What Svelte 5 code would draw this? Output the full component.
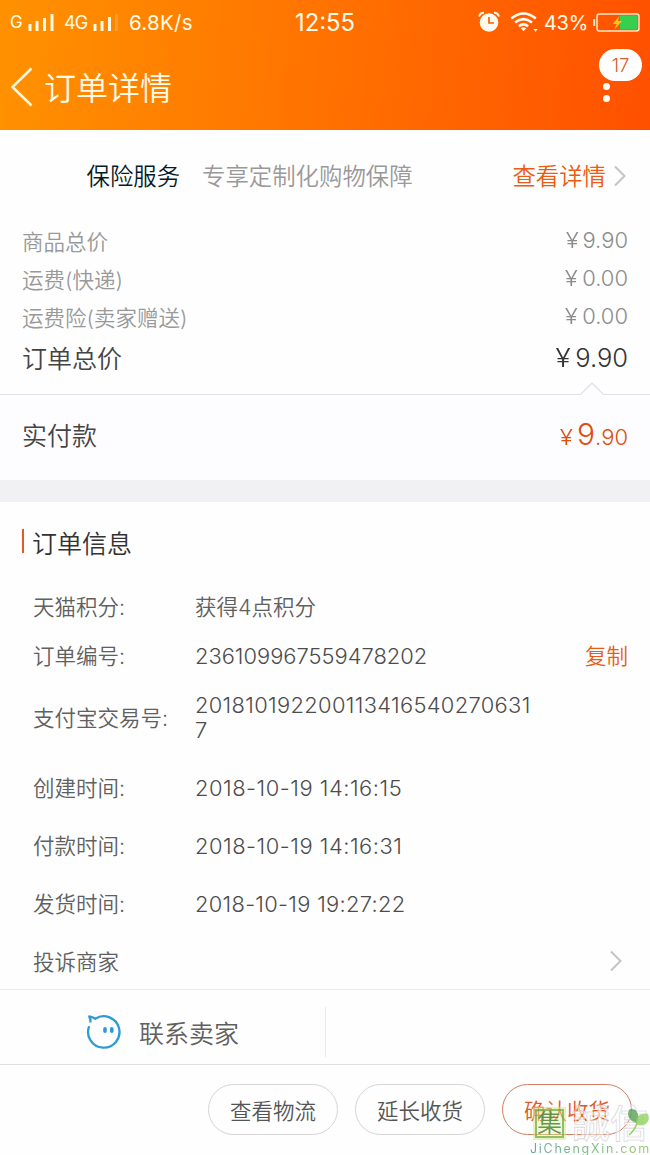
<script>
  const fees = [
    { label: '商品总价', value: '9.90' },
    { label: '运费(快递)', value: '0.00' },
    { label: '运费险(卖家赠送)', value: '0.00' }
  ];
  const info = [
    { label: '天猫积分:', value: '获得4点积分', h: 50, cls: 'points' },
    { label: '订单编号:', value: '236109967559478202', h: 49, copy: true, cls: 'order' },
    { label: '支付宝交易号:', value: '2018101922001134165402706317', h: 74, cls: 'trade' },
    { label: '创建时间:', value: '2018-10-19 14:16:15', h: 67, cls: 'date' },
    { label: '付款时间:', value: '2018-10-19 14:16:31', h: 48, cls: 'date' },
    { label: '发货时间:', value: '2018-10-19 19:27:22', h: 68, cls: 'date sent' }
  ];
</script>

<div class="page">
  <header>
    <div class="status">
      <span class="net">G</span>
      <svg class="sig1" width="26" height="20" viewBox="0 0 26 20"><path d="M2 12v7M9 9v10M16.500 6v13M24 2v17" stroke="#fffbe4" stroke-width="3" /></svg>
      <span class="net four">4G</span>
      <svg class="sig2" width="26" height="20" viewBox="0 0 26 20"><path d="M3 12v7M10 9v10M17.500 5v14" stroke="#fffbe4" stroke-width="3" /><path d="M24.500 2v17" stroke="#fffbe4" stroke-opacity=".2" stroke-width="3" /></svg>
      <span class="speed">6.8K/s</span>
      <span class="time">12:55</span>
      <svg class="alarm" width="22" height="22" viewBox="0 0 22 22"><circle cx="11" cy="11.500" r="9.300" fill="#fffbee" /><path d="M1 5.500Q2.200 1.800 6 1.800M16 1.800q3.800 0 5 3.700" fill="none" stroke="#fffbee" stroke-width="2" /><path d="M11 6v6h5" fill="none" stroke="#f76300" stroke-width="1.700" /></svg>
      <svg class="wifi" width="28" height="20" viewBox="0 0 28 20"><path d="M1.200 6.500Q13.500-3.500 25.800 6.500M5 10.500q8.500-6.800 17 0M8.800 14.200q4.700-3.600 9.400 0" fill="none" stroke="#fffbee" stroke-width="2.500" /><path d="M10.800 16.200q2.700-1.800 5.400 0L13.500 19.300zM23.300 17h4.400l-2.200 2.700z" fill="#fffbee" /></svg>
      <span class="percent">43%</span>
      <svg class="battery" width="47" height="19" viewBox="0 0 47 19"><path d="M1.200 6v7" stroke="#ffe6c5" stroke-width="2" /><rect x="4" y="1" width="42" height="17" rx="2.500" fill="none" stroke="#ffe6c5" stroke-width="1.500" /><rect x="27" y="2.500" width="17.500" height="14" fill="#37cf50" /><path d="M26.500 3l-7 8h4l-2 5.500 7.500-8.500h-4z" fill="#ffc21b" /></svg>
    </div>
    <div class="titlebar">
      <svg class="back" width="24" height="40" viewBox="0 0 24 40"><path d="M21.500 1.500L2.500 20l19 18.500" fill="none" stroke="#fff8df" stroke-width="2.500" /></svg>
      <h1>订单详情</h1>
      <div class="more">
        <span class="badge">17</span>
        <i></i><i></i>
      </div>
    </div>
  </header>

  <section class="insurance">
    <span class="name">保险服务</span>
    <span class="desc">专享定制化购物保障</span>
    <span class="link">查看详情</span>
    <svg width="14" height="22" viewBox="0 0 14 22"><path d="M2 1.500L11.500 11 2 20.500" fill="none" stroke="#c4c4c4" stroke-width="2" /></svg>
  </section>

  <section class="fees">
    {#each fees as fee}
      <div class="fee"><span>{fee.label}</span><span class="amount"><b>¥</b>{fee.value}</span></div>
    {/each}
    <div class="fee total"><span>订单总价</span><span class="amount"><b>¥</b>{'9.90'}</span></div>
  </section>

  <section class="paid">
    <svg class="notch" width="24" height="14" viewBox="0 0 24 14"><path d="M0 13L12 1l12 12v1H0z" fill="#fdfcff" /><path d="M.5 12.500L12 1l11.500 11.500" fill="none" stroke="#e2e1e5" stroke-width="1.300" /></svg>
    <span>实付款</span>
    <span class="amount"><b>¥</b><em>9</em>.90</span>
  </section>

  <section class="details">
    <h2>订单信息</h2>
    {#each info as row}
      <div class="row" style="height: {row.h}px">
        <span class="label">{row.label}</span>
        <span class="value {row.cls}">{row.value}</span>
        {#if row.copy}<span class="copy">复制</span>{/if}
      </div>
    {/each}
    <div class="row complaint">
      <span class="label">投诉商家</span>
      <svg width="14" height="22" viewBox="0 0 14 22"><path d="M2 1.500L11.500 11 2 20.500" fill="none" stroke="#c4c4c4" stroke-width="2" /></svg>
    </div>
  </section>

  <section class="contact">
    <div class="seller">
      <svg width="36" height="36" viewBox="0 0 36 36"><path d="M3.200 12.200A15.700 15.700 0 1 0 9.300 4.800Q6.500 3 3.200 2.400 4.700 5 4.500 8.500" fill="none" stroke="#2e9bd8" stroke-width="2.300" stroke-linejoin="round" /><path d="M19 14.800v2.400M25.800 14.800v2.400" stroke="#2e9bd8" stroke-width="3.600" stroke-linecap="round" /></svg>
      <span>联系卖家</span>
    </div>
  </section>

  <footer>
    <button>查看物流</button>
    <button>延长收货</button>
    <button class="primary">确认收货</button>
  </footer>

  <div class="mark">
    <div class="brand">
      <span class="seal">集</span>
      <span class="outline">誠信</span>
      <svg class="leaf" width="22" height="30" viewBox="0 0 22 30"><path d="M9 17C0 15-2 7 2 3c7-1 10 5 7 14z" fill="#4f9e4b" fill-opacity=".75" /><path d="M8 18c-1-7 3-11 12-10 3 7-3 14-12 10z" fill="#8bd05a" fill-opacity=".75" /><path d="M9 17Q7 24 1 29" fill="none" stroke="#8bd05a" stroke-width="1.300" /></svg>
    </div>
    <div class="site">JiChengXin.com</div>
  </div>
</div>

<style>
  :global(body) { margin: 0; background: #fefefe; }
  .page {
    position: relative; width: 650px; height: 1155px; overflow: hidden;
    background: #fefefe; color: #606060;
    font-family: Inter, "Noto Sans CJK SC", sans-serif; font-weight: 350; font-size: 21.500px;
    display: flex; flex-direction: column;
  }
  section, header, footer { box-sizing: border-box; flex: none; }
  svg { display: block; flex: none; }
  span { white-space: nowrap; }
  b, em { font-weight: inherit; font-style: normal; }

  header { height: 130px; background: linear-gradient(97deg, #ff9200 0%, #ff7300 48%, #ff5000 100%); color: #fffbe9; }
  .status { height: 44px; display: flex; align-items: center; font-weight: 400; font-size: 20.500px; }
  .net { width: 18px; margin-left: 10px; font-size: 17px; letter-spacing: -.5px; }
  .net.four { width: 28px; margin-left: 10px; font-size: 18px; letter-spacing: -1px; }
  .speed { margin-left: 11px; width: 65px; padding-top: 1px; letter-spacing: .3px; }
  .time { margin-left: 101px; width: 62px; font-size: 23.800px; padding-top: 1px; }
  .alarm { margin-left: 121px; }
  .wifi { margin-left: 10px; }
  .percent { margin-left: 6px; width: 43px; font-size: 20px; letter-spacing: -.3px; padding-top: 1px; }
  .battery { margin-left: 6px; }
  .titlebar { height: 86px; display: flex; align-items: center; }
  .back { margin-left: 10px; }
  h1 { margin: 3px 0 0 10px; font-size: 32px; font-weight: 350; line-height: 40px; }
  .more { margin-left: auto; width: 51px; height: 86px; display: flex; flex-direction: column; }
  .badge { width: 43px; height: 32px; margin: 5px 0 1px; border-radius: 16px; background: #fff; color: #d4602c; font-size: 18.500px; line-height: 33px; text-align: center; }
  .more i { width: 7px; height: 7px; border-radius: 50%; background: #fffbee; margin: 1px 0 4px 4px; }

  .insurance { height: 91px; display: flex; align-items: center; padding: 0 23px 0 86.500px; font-size: 23.400px; }
  .insurance span { margin-top: -1px; }
  .name { color: #051b28; }
  .desc { color: #999; margin-left: 22px; }
  .link { color: #ea5b13; margin-left: auto; margin-right: 7px; }

  .fees { height: 173px; color: #999; }
  .fee { height: 38px; display: flex; justify-content: space-between; align-items: center; padding: 0 22px; }
  .amount { display: flex; align-items: baseline; }
  .fee .amount { font-size: 22px; color: #8c8c8c; }
  .amount b { margin-right: 4px; transform: scaleX(1.1); transform-origin: right; }
  .total { height: 44px; font-size: 25px; color: #444; }
  .total .amount { font-size: 25.500px; color: #333; }

  .paid { position: relative; height: 86px; border-top: 1px solid #e2e1e5; background: #fdfcff; display: flex; justify-content: space-between; align-items: center; padding: 0 22px 7px; font-size: 25px; color: #444; }
  .paid .amount { color: #dc4f0e; font-size: 22px; }
  .paid em { font-size: 30px; }
  .notch { position: absolute; right: 46px; top: -13px; }

  .details { height: 509px; border-top: 22px solid #f1f0f2; }
  h2 { margin: 0; height: 79px; display: flex; align-items: center; padding-left: 22px; font-size: 25px; font-weight: 350; color: #333; }
  h2::before { content: ''; width: 2px; height: 24px; background: #e2592a; margin: -1px 8px 0 0; }
  .row { display: flex; align-items: center; padding: 0 22px 0 33px; }
  .label { width: 162px; flex: none; margin-top: -2px; }
  .value { width: 345px; line-height: 25px; font-size: 21.900px; color: #4c4c4c; white-space: normal; overflow-wrap: anywhere; padding-top: 2px; }
  .points { font-size: 21.500px; color: #606060; }
  .trade { letter-spacing: .33px; }
  .date { letter-spacing: .54px; }
  .sent { letter-spacing: .3px; }
  .copy { margin-left: auto; margin-top: -2px; color: #ea5b13; }
  .complaint { height: 48px; justify-content: space-between; padding-right: 27px; }

  .contact { height: 76px; border-top: 1px solid #ebebeb; border-bottom: 1px solid #e1e1e1; display: flex; align-items: center; }
  .seller { width: 326px; height: 50px; margin-top: 9px; box-sizing: border-box; padding-left: 86px; display: flex; align-items: center; gap: 17px; border-right: 1px solid #e8e8e8; font-size: 25px; }

  footer { height: 90px; display: flex; justify-content: flex-end; align-items: center; gap: 17px; padding: 0 18px 2px 0; }
  button { width: 130px; height: 51px; padding: 0; border: 1px solid #d5d5d5; border-radius: 26px; background: transparent; color: #555; font: inherit; }
  .primary { border-color: #d08062; color: #e0591f; }

  .mark { position: absolute; left: 530px; top: 1106px; width: 120px; height: 49px; }
  .brand { display: flex; align-items: center; height: 34px; position: relative; }
  .seal { width: 25px; height: 25px; margin-left: 5px; border: 2px solid #77a842c0; outline: 2px solid #cbed9290; background: #d9f4a56e; color: #57883be0; font-size: 25px; font-weight: 350; line-height: 24px; text-align: center; }
  .outline { margin-left: 8px; font-size: 38px; line-height: 34px; font-weight: 500; color: #ffffff90; -webkit-text-stroke: .6px #d2ced2; }
  .leaf { position: absolute; left: 98px; top: 0; }
  .site { font-size: 12.500px; font-weight: 400; line-height: 17px; letter-spacing: 1.700px; white-space: nowrap; background: linear-gradient(90deg, #66a997, #93cc69); background-clip: text; color: transparent; }
</style>
